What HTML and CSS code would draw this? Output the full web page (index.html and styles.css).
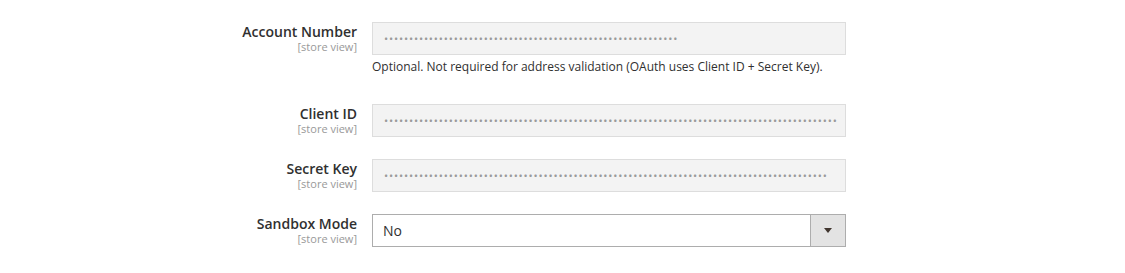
FILE: index.html
```html
<!DOCTYPE html>
<html lang="en">
<head>
  <meta charset="UTF-8" />
  <title>Carrier Settings</title>
  <link rel="stylesheet" href="styles.css">
</head>
<body>

  <div class="config">
    <div class="row">
      <div class="label">
        <span class="title">Account Number</span>
        <span class="scope">[store view]</span>
      </div>
      <div class="value">
        <div class="field disabled"><span class="mask">•••••••••••••••••••••••••••••••••••••••••••••••••••••••••••</span></div>
        <p class="note">Optional. Not required for address validation (OAuth uses Client ID + Secret Key).</p>
      </div>
    </div>

    <div class="row">
      <div class="label">
        <span class="title">Client ID</span>
        <span class="scope">[store view]</span>
      </div>
      <div class="value">
        <div class="field disabled"><span class="mask">•••••••••••••••••••••••••••••••••••••••••••••••••••••••••••••••••••••••••••••••••••••••••••</span></div>
      </div>
    </div>

    <div class="row">
      <div class="label">
        <span class="title">Secret Key</span>
        <span class="scope">[store view]</span>
      </div>
      <div class="value">
        <div class="field disabled"><span class="mask">•••••••••••••••••••••••••••••••••••••••••••••••••••••••••••••••••••••••••••••••••••••••••</span></div>
      </div>
    </div>

    <div class="row">
      <div class="label">
        <span class="title">Sandbox Mode</span>
        <span class="scope">[store view]</span>
      </div>
      <div class="value">
        <div class="select">
          <span class="selected">No</span>
          <span class="arrow"></span>
        </div>
      </div>
    </div>
  </div>

</body>
</html>
```

FILE: styles.css
```css
* {
  box-sizing: border-box;
  font-family: 'Open Sans', sans-serif;
}

body {
  margin: 0;
  background: #fff;
  color: #303030;
}

.config {
  padding-top: 22px;
}

.row {
  display: grid;
  grid-template-columns: 357px 474px;
  column-gap: 15px;
  margin-bottom: 22px;
}

.label {
  display: flex;
  flex-direction: column;
  align-items: flex-end;
  padding-top: 1px;
}

.title {
  font-size: 14px;
  font-weight: 600;
  line-height: 17px;
  color: #303030;
}

.scope {
  font-size: 11px;
  line-height: 14px;
  color: #999;
}

.field {
  height: 33px;
  border: 1px solid #ddd;
  background: #f3f3f3;
  display: flex;
  align-items: center;
  padding-left: 11px;
  overflow: hidden;
}

.mask {
  font-size: 11px;
  letter-spacing: 0.85px;
  color: #9a9a9a;
  white-space: nowrap;
  line-height: 1;
}

.note {
  margin: 3px 0 6px;
  font-size: 12px;
  line-height: 18px;
  color: #303030;
}

.select {
  height: 33px;
  border: 1px solid #adadad;
  background: #fff;
  display: flex;
  align-items: center;
  justify-content: space-between;
}

.selected {
  padding-left: 10px;
  font-size: 14px;
  color: #303030;
}

.arrow {
  width: 35px;
  height: 100%;
  background: #e3e3e3;
  border-left: 1px solid #adadad;
  display: flex;
  align-items: center;
  justify-content: center;
}

.arrow::after {
  content: "";
  border-left: 4px solid transparent;
  border-right: 4px solid transparent;
  border-top: 5px solid #41362f;
}
```
